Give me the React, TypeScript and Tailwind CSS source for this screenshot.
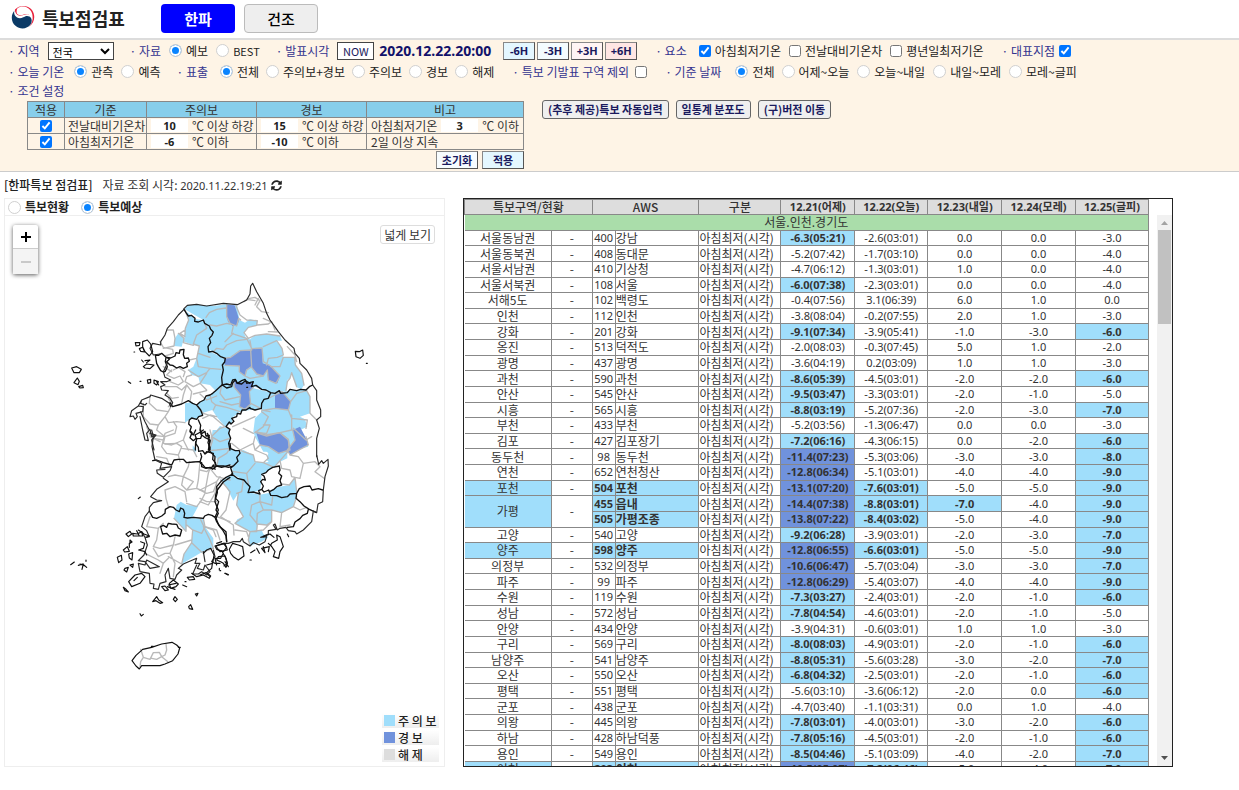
import React from "react";
import { FaSyncAlt } from "react-icons/fa";

type Row = {
  area?: string;
  span?: number;
  areaAlert?: boolean;
  id: string;
  name: string;
  v: [string, string, string, string, string];
  // one letter per day: n = none, a = advisory, w = warning
  lv: string;
};

const r = (
  area: string | undefined,
  id: string,
  name: string,
  v: Row["v"],
  lv: string,
  areaAlert = false,
  span = 1,
): Row => ({ area, id, name, v, lv, areaAlert, span });

const rows: Row[] = [
  r("서울동남권", "400", "강남", ["-6.3(05:21)", "-2.6(03:01)", "0.0", "0.0", "-3.0"], "annnn"),
  r("서울동북권", "408", "동대문", ["-5.2(07:42)", "-1.7(03:10)", "0.0", "0.0", "-4.0"], "nnnnn"),
  r("서울서남권", "410", "기상청", ["-4.7(06:12)", "-1.3(03:01)", "1.0", "0.0", "-4.0"], "nnnnn"),
  r("서울서북권", "108", "서울", ["-6.0(07:38)", "-2.3(03:01)", "0.0", "0.0", "-4.0"], "annnn"),
  r("서해5도", "102", "백령도", ["-0.4(07:56)", "3.1(06:39)", "6.0", "1.0", "0.0"], "nnnnn"),
  r("인천", "112", "인천", ["-3.8(08:04)", "-0.2(07:55)", "2.0", "1.0", "-3.0"], "nnnnn"),
  r("강화", "201", "강화", ["-9.1(07:34)", "-3.9(05:41)", "-1.0", "-3.0", "-6.0"], "annna"),
  r("옹진", "513", "덕적도", ["-2.0(08:03)", "-0.3(07:45)", "5.0", "1.0", "-2.0"], "nnnnn"),
  r("광명", "437", "광명", ["-3.6(04:19)", "0.2(03:09)", "1.0", "1.0", "-3.0"], "nnnnn"),
  r("과천", "590", "과천", ["-8.6(05:39)", "-4.5(03:01)", "-2.0", "-2.0", "-6.0"], "annna"),
  r("안산", "545", "안산", ["-9.5(03:47)", "-3.3(03:01)", "-2.0", "-1.0", "-5.0"], "annnn"),
  r("시흥", "565", "시흥", ["-8.8(03:19)", "-5.2(07:36)", "-2.0", "-3.0", "-7.0"], "annna"),
  r("부천", "433", "부천", ["-5.2(03:56)", "-1.3(06:47)", "0.0", "0.0", "-3.0"], "nnnnn"),
  r("김포", "427", "김포장기", ["-7.2(06:16)", "-4.3(06:15)", "0.0", "-2.0", "-6.0"], "annna"),
  r("동두천", "98", "동두천", ["-11.4(07:23)", "-5.3(03:06)", "-3.0", "-3.0", "-8.0"], "wnnna"),
  r("연천", "652", "연천청산", ["-12.8(06:34)", "-5.1(03:01)", "-4.0", "-4.0", "-9.0"], "wnnna"),
  r("포천", "504", "포천", ["-13.1(07:20)", "-7.6(03:01)", "-5.0", "-5.0", "-9.0"], "wanna", true),
  r("가평", "455", "읍내", ["-14.4(07:38)", "-8.8(03:01)", "-7.0", "-4.0", "-9.0"], "waana", true, 2),
  r(undefined, "505", "가평조종", ["-13.8(07:22)", "-8.4(03:02)", "-5.0", "-4.0", "-9.0"], "wanna", true),
  r("고양", "540", "고양", ["-9.2(06:28)", "-3.9(03:01)", "-2.0", "-3.0", "-7.0"], "annna"),
  r("양주", "598", "양주", ["-12.8(06:55)", "-6.6(03:01)", "-5.0", "-5.0", "-9.0"], "wanna", true),
  r("의정부", "532", "의정부", ["-10.6(06:47)", "-5.7(03:04)", "-3.0", "-3.0", "-7.0"], "wnnna"),
  r("파주", "99", "파주", ["-12.8(06:29)", "-5.4(03:07)", "-4.0", "-4.0", "-9.0"], "wnnna"),
  r("수원", "119", "수원", ["-7.3(03:27)", "-2.4(03:01)", "-2.0", "-1.0", "-6.0"], "annna"),
  r("성남", "572", "성남", ["-7.8(04:54)", "-4.6(03:01)", "-2.0", "-1.0", "-5.0"], "annnn"),
  r("안양", "434", "안양", ["-3.9(04:31)", "-0.6(03:01)", "1.0", "1.0", "-3.0"], "nnnnn"),
  r("구리", "569", "구리", ["-8.0(08:03)", "-4.9(03:01)", "-2.0", "-1.0", "-6.0"], "annna"),
  r("남양주", "541", "남양주", ["-8.8(05:31)", "-5.6(03:28)", "-3.0", "-2.0", "-7.0"], "annna"),
  r("오산", "550", "오산", ["-6.8(04:32)", "-2.5(03:01)", "-2.0", "-1.0", "-6.0"], "annna"),
  r("평택", "551", "평택", ["-5.6(03:10)", "-3.6(06:12)", "-2.0", "0.0", "-6.0"], "nnnna"),
  r("군포", "438", "군포", ["-4.7(03:40)", "-1.1(03:31)", "0.0", "1.0", "-4.0"], "nnnnn"),
  r("의왕", "445", "의왕", ["-7.8(03:01)", "-4.0(03:01)", "-3.0", "-2.0", "-6.0"], "annna"),
  r("하남", "428", "하남덕풍", ["-7.8(05:16)", "-4.5(03:01)", "-2.0", "-1.0", "-6.0"], "annna"),
  r("용인", "549", "용인", ["-8.5(04:46)", "-5.1(03:09)", "-4.0", "-2.0", "-7.0"], "annna"),
  r("이천", "203", "이천", ["-10.5(05:07)", "-7.2(06:46)", "-5.0", "-4.0", "-7.0"], "wanna", true),
];

const levelClass: Record<string, string> = {
  n: "",
  a: "bg-[#a0defb] font-bold",
  w: "bg-[#7092dc] font-bold",
};

const hangul = "font-['Noto_Sans_CJK_KR',sans-serif]";

function Radio({ name, label, checked, className = "" }: { name: string; label: string; checked?: boolean; className?: string }) {
  return (
    <label className={`flex items-center gap-1 ${className}`}>
      <input
        type="radio"
        name={name}
        defaultChecked={checked}
        className="size-[13px] shrink-0 appearance-none rounded-full border border-[#d0d0d0] bg-white checked:bg-[#0a84ff] checked:shadow-[inset_0_0_0_2px_white]"
      />
      {label}
    </label>
  );
}

function Check({ label, checked, className = "" }: { label: string; checked?: boolean; className?: string }) {
  return (
    <label className={`flex items-center gap-1 ${className}`}>
      <input type="checkbox" defaultChecked={checked} className="size-3 shrink-0 accent-[#0075ff]" />
      {label}
    </label>
  );
}

function Caption({ children, className = "" }: { children: React.ReactNode; className?: string }) {
  return <span className={`text-[#33338f] ${className}`}>· {children}</span>;
}

function Num({ value, label }: { value: string; label: string }) {
  return (
    <input
      aria-label={label}
      defaultValue={value}
      className="h-[13px] w-[37px] bg-white text-center font-['Noto_Sans',sans-serif] text-[11px] font-bold text-[#222]"
    />
  );
}

const smallBtn = "h-[18px] border border-[#888] border-r-[#555] border-b-[#555] text-[11px] leading-[14px] font-bold text-[#1a1a5e]";

function Filters() {
  return (
    <section className="border-t-2 border-b border-t-[#dcdcdc] border-b-[#ccc] bg-[#fef4e6] pb-[2px] pl-2 text-[12px] leading-[18px] text-[#222]">
      <div className="flex h-[21px] items-center whitespace-nowrap">
        <Caption>지역</Caption>
        <select
          aria-label="지역"
          className="ml-2 h-[18px] w-[66px] border border-[#444] bg-white pl-0 text-[11px] text-black"
        >
          <option>전국</option>
        </select>
        <Caption className="ml-4">자료</Caption>
        <Radio name="src" label="예보" checked className="ml-2" />
        <Radio name="src" label="BEST" className="ml-2 text-[11px]" />
        <Caption className="ml-4">발표시각</Caption>
        <button className="ml-2 h-[18px] w-[37px] border border-[#444] bg-white text-[11px] leading-[14px] text-[#1a1a5e]">NOW</button>
        <strong className="ml-[5px] font-['Noto_Sans',sans-serif] text-[14px] text-[#12126a]">2020.12.22.20:00</strong>
        <div className="ml-3 flex gap-[2px] font-['Noto_Sans',sans-serif]">
          <button className={`${smallBtn} w-8 bg-[#e4f7ff]`}>-6H</button>
          <button className={`${smallBtn} w-8 bg-[#f4fcff]`}>-3H</button>
          <button className={`${smallBtn} w-8 bg-[#fff4f4]`}>+3H</button>
          <button className={`${smallBtn} w-8 bg-[#ffe6e4]`}>+6H</button>
        </div>
        <Caption className="ml-[18px]">요소</Caption>
        <Check label="아침최저기온" checked className="ml-3" />
        <Check label="전날대비기온차" className="ml-2" />
        <Check label="평년일최저기온" className="ml-2" />
        <label className="ml-[18px] flex items-center gap-1 text-[#33338f]">
          · 대표지점
          <input type="checkbox" defaultChecked className="size-3 accent-[#0075ff]" />
        </label>
      </div>

      <div className="flex h-[21px] items-center whitespace-nowrap">
        <Caption>오늘 기온</Caption>
        <Radio name="today" label="관측" checked className="ml-[10px]" />
        <Radio name="today" label="예측" className="ml-2" />
        <Caption className="ml-4">표출</Caption>
        <Radio name="show" label="전체" checked className="ml-3" />
        <Radio name="show" label="주의보+경보" className="ml-[7px]" />
        <Radio name="show" label="주의보" className="ml-[7px]" />
        <Radio name="show" label="경보" className="ml-[7px]" />
        <Radio name="show" label="해제" className="ml-[7px]" />
        <label className="ml-[18px] flex items-center gap-[6px] text-[#33338f]">
          · 특보 기발표 구역 제외
          <input type="checkbox" className="size-3" />
        </label>
        <Caption className="ml-[18px]">기준 날짜</Caption>
        <Radio name="day" label="전체" checked className="ml-[14px]" />
        <Radio name="day" label="어제~오늘" className="ml-[7px]" />
        <Radio name="day" label="오늘~내일" className="ml-2" />
        <Radio name="day" label="내일~모레" className="ml-2" />
        <Radio name="day" label="모레~글피" className="ml-2" />
      </div>

      <div className="flex h-[18px] items-center">
        <Caption>조건 설정</Caption>
      </div>

      <div className="flex items-start whitespace-nowrap pl-[19px]">
        <div>
          <table className="mt-px table-fixed border-collapse text-[12px] leading-[15px] text-[#333] [&_td]:border [&_td]:border-[#888] [&_td]:p-0 [&_th]:border [&_th]:border-[#888] [&_th]:p-0 [&_th]:font-normal">
            <colgroup>
              <col className="w-[37px]" />
              <col className="w-[82px]" />
              <col className="w-[110px]" />
              <col className="w-[110px]" />
              <col className="w-[157px]" />
            </colgroup>
            <thead>
              <tr className="bg-[#87ceeb]">
                <th>적용</th>
                <th>기준</th>
                <th>주의보</th>
                <th>경보</th>
                <th>비고</th>
              </tr>
            </thead>
            <tbody>
              <tr>
                <td>
                  <input type="checkbox" aria-label="전날대비기온차 적용" defaultChecked className="mx-auto block size-3 accent-[#0075ff]" />
                </td>
                <td>
                  <div className="pl-[3px]">전날대비기온차</div>
                </td>
                <td>
                  <div className="flex items-center gap-1 pl-1">
                    <Num value="10" label="주의보 전날대비" />℃ 이상 하강
                  </div>
                </td>
                <td>
                  <div className="flex items-center gap-1 pl-1">
                    <Num value="15" label="경보 전날대비" />℃ 이상 하강
                  </div>
                </td>
                <td>
                  <div className="flex items-center gap-1 pl-1">
                    아침최저기온 <Num value="3" label="아침최저기온 기준" />℃ 이하
                  </div>
                </td>
              </tr>
              <tr>
                <td>
                  <input type="checkbox" aria-label="아침최저기온 적용" defaultChecked className="mx-auto block size-3 accent-[#0075ff]" />
                </td>
                <td>
                  <div className="pl-[3px]">아침최저기온</div>
                </td>
                <td>
                  <div className="flex items-center gap-1 pl-1">
                    <Num value="-6" label="주의보 최저기온" />℃ 이하
                  </div>
                </td>
                <td>
                  <div className="flex items-center gap-1 pl-1">
                    <Num value="-10" label="경보 최저기온" />℃ 이하
                  </div>
                </td>
                <td>
                  <div className="pl-1">2일 이상 지속</div>
                </td>
              </tr>
            </tbody>
          </table>
          <div className="mt-px flex justify-end gap-1">
            <button className={`${smallBtn} w-[42px] bg-[#f7fcff]`}>초기화</button>
            <button className={`${smallBtn} w-[42px] bg-[#e4f7ff]`}>적용</button>
          </div>
        </div>
        <div className="ml-[18px] flex gap-[7px]">
          {["(추후 제공)특보 자동입력", "일통계 분포도", "(구)버전 이동"].map((t) => (
            <button
              key={t}
              className="h-[19px] rounded-[3px] border border-[#666] bg-[#efefef] px-[5px] text-[11px] leading-[15px] font-bold text-[#1a1a5e]"
            >
              {t}
            </button>
          ))}
        </div>
      </div>
    </section>
  );
}

const A = "translate(50 270) scale(.33333)";
const B = "translate(200 270) scale(.33333)";
const C = "translate(50 430) scale(.33333)";
const D = "translate(200 430) scale(.33333)";
const E = "translate(50 560) scale(.33333)";

function KoreaMap() {
  return (
    <svg viewBox="5 216 439 550" className="block w-full" role="img" aria-label="특보 예상 지도" strokeLinejoin="round" strokeLinecap="round">
      {/* advisory areas */}
      <g fill="#a0defb">
        <path
          transform={B}
          d="M-46,118L-36,105L0,105L40,108L80,103L112,107L118,150L135,158L150,148L172,152L170,166L145,172L132,188L138,205L150,208L165,196L200,192L240,198L246,212L228,212L246,235L250,262L284,262L286,285L305,310L312,345L304,358L290,352L274,308L270,325L262,330L258,362L215,368L180,355L103,335L65,348L72,265L30,240L25,215L40,188L10,150Z"
        />
        <path
          transform={A}
          d="M404,120L416,150L406,175L402,215L430,225L448,228L440,265L430,290L415,300L425,315L445,320L450,340L480,345L497,362L515,345L525,265L480,245L478,205L490,185L460,150L435,147ZM385,190L402,205L395,230L372,228L375,205Z"
        />
        <path
          transform={A}
          d="M440,405L480,375L515,345L560,340L600,352L665,368L655,388L632,415L600,420L570,425L550,440L545,460L525,470L500,440L487,420L455,430ZM405,400L425,397L440,405L458,432L440,446L420,448L405,458ZM510,468L538,476L540,540L478,540L484,500Z"
        />
        <path
          transform={B}
          d="M215,368L265,362L320,358L330,380L330,430L300,440L315,448L322,470L300,480L325,530L262,545L190,545L165,500L160,485L165,445L185,425L182,415Z"
        />
        <path
          transform={D}
          d="M38,0L88,0L90,55L118,65L110,100L85,108L50,108L50,85L28,62ZM95,80L130,60L160,75L165,95L190,98L210,95L222,115L200,125L185,135L183,180L150,190L145,160L98,132ZM180,45L262,60L262,85L240,95L222,112L200,90L205,70ZM62,150L95,135L145,160L150,188L180,194L210,188L215,175L268,165L285,142L290,190L280,230L245,248L215,240L215,275L200,285L172,282L170,305L150,305L105,280L112,268L130,260L110,225L115,190L100,212L78,168ZM150,305L185,300L190,312L205,322L185,335L150,348L145,328Z"
        />
        <path
          transform={C}
          d="M380,225L392,215L410,225L445,228L425,265L460,265L465,290L490,325L490,355L455,367L395,402L402,372L425,338L428,300L410,285L408,304L395,290L372,265ZM428,46L440,60L434,70L428,60Z"
        />
      </g>
      <path transform={D} fill="#fff" d="M240,110L245,140L240,165L210,182L180,186L186,135L200,125L222,110Z" />

      {/* warning areas */}
      <g fill="#7092dc">
        <path
          transform={B}
          d="M80,104L104,106L118,150L112,164L98,168L84,155L80,135ZM72,265L92,262L120,242L152,240L154,236L186,234L188,280L212,288L240,318L232,340L205,330L200,302L190,318L170,312L152,290L138,300L135,318L120,308L118,288L75,286ZM103,335L158,338L160,352L148,365L152,402L140,418L118,410L122,375L103,352ZM225,375L246,365L272,395L265,420L225,415Z"
        />
        <path transform={D} d="M168,5L200,14L240,8L265,28L268,60L236,70L205,50L180,45ZM278,0L300,-10L318,25L325,45L300,58L270,75L262,60L285,30Z" />
      </g>

      {/* district borders */}
      <g fill="none" stroke="#b9b9b9" strokeWidth="4">
        <path
          transform={A}
          d="M404,118L416,150L406,175L405,195M468,142L478,128L500,118L528,114M530,105V140L540,160L560,168L566,145L572,150M480,165L500,168L530,160L540,162M490,245L500,235L520,238L530,225L560,212L590,208M460,150L470,175L440,195L430,222L448,228L440,265L418,270M350,180H370L375,205L372,228L340,235M330,215L340,232L368,238L370,250L345,258M385,190L402,205L400,218L430,226M405,180L390,190L405,200M445,250L480,262M440,265L445,290L480,295L512,298M415,300L445,320L470,308L480,295M450,340L470,310M425,315L410,320L405,335L430,350L450,340L470,360M365,300L350,315L372,325L390,318L400,335L385,345L360,335M345,350L380,350L395,360L410,345L400,375L395,400M370,300L385,292L405,305L400,320M340,290L365,305M410,345L425,365L420,395M470,362L430,372M350,370L365,385L385,382M355,385L365,400L355,410M300,378L298,400L320,420L355,425L365,405M355,425L345,440L355,458L380,455L405,458M280,400L280,440L300,462L325,465L345,440M325,465L320,480L345,500L375,490L380,470L370,455M290,470L300,495L345,500L340,520L365,525L400,510L410,480M300,500L330,515M400,510L415,540M440,405L460,430L490,440L525,470M480,375L485,395L497,405L490,420M515,345L510,370L525,390L570,380M497,405L530,412L570,425M458,445L480,435L500,440M525,470L510,475L484,500L480,540M484,500L510,515L540,505"
        />
        <path
          transform={B}
          d="M132,95L145,86L165,82L180,92L170,110L185,125L205,128M108,107L120,135L140,150L172,152L170,166L145,172L132,188L145,205L165,196L200,192L240,198M165,105L175,85M140,88L165,92M190,145L212,155M205,185L232,186M172,165L205,162L215,155L225,180M100,168L95,190L140,205L155,235M75,215L100,190M72,265L92,262L120,242L152,240L155,290L140,300L135,318L118,305L118,288L75,286M155,236L186,234L190,275L212,288L240,318L228,340L205,330L202,300L190,318L170,312L155,292M155,240L150,212M190,230L230,212L246,235L250,255L232,262L205,265L200,285M250,262H284L286,285L305,310L312,345M250,262L240,290L212,290M262,230L285,255L290,275M258,362L262,335L270,325L275,308L290,350M135,318L150,325L180,320L190,318M100,335L103,352L122,375L118,410L135,418L152,402L148,365L160,352M60,395L95,405L118,400M152,400L182,415M0,372L20,390L50,378M205,385L225,375L246,365L272,395L265,420L225,415L195,420M272,395L290,370L320,362L330,380L330,430L350,450M265,420L275,445L322,450L318,475M185,425L205,440L190,470L165,488M185,420L210,425M165,488L200,490L210,465L190,465M168,488L200,498L240,488L265,510L270,540M240,488L275,480L275,435M280,475L318,510L335,500M98,470L120,460L165,440M130,475L160,490"
        />
        <path
          transform={C}
          d="M310,25L340,30L345,10L370,0M340,30L335,50L350,70L385,75L395,50L380,40L345,42M385,75L390,95M395,55L430,60L440,80M320,80L350,85L358,105M355,140L375,135L400,140L415,110L418,95M400,140L430,155L410,180L395,165L400,140M450,95L445,150L440,175L465,185L475,130L480,115L500,140L540,150M345,180L375,170L405,185L410,215M345,180L348,205L355,230M410,180L440,175L470,190L490,185L500,160M450,205L470,215L500,215M410,220L440,230L455,210L465,190M300,260L290,290L325,295L340,280M325,295L320,330L310,350L330,355L370,345L375,320M370,345L360,370L375,400L370,440M310,355L325,380L345,370L360,370M285,370L325,390L340,400L330,430M340,400L355,385M372,265L395,290L408,304V270M410,285L428,300L455,310L465,290L460,265L430,262M428,300L425,338L455,367L490,355M425,338L402,372L395,402M375,345L425,330M355,380L395,402M465,290L500,300L510,330M500,260L540,275"
        />
        <path
          transform={D}
          d="M28,62L50,60L90,55M50,108L55,85L80,70L90,55M30,0L38,30L28,62M95,40L120,60L160,40L165,20M120,60L130,65L160,75L165,95L190,98L205,85L200,75L165,60L160,40M168,5L200,14L240,8L265,28L268,60L236,70L205,50L180,45L165,60M278,0L285,30L262,60L270,75L300,58L325,45L318,20M268,60L240,92L222,112L190,98M240,92L245,115L270,120L275,140L300,145L310,100L295,80L270,75M310,100L345,95L360,110L345,125L372,145M285,142L268,165L245,162M285,142L290,185M100,125L140,130L165,100M140,130L145,160M0,120L20,125L40,105M0,180L50,155L60,140M50,155L45,190L25,225L0,215M62,150L90,185L78,240L60,262M110,190L125,185L130,150M115,190L110,225L130,260L105,280L150,305H170L172,282L150,255L155,225L180,215V195M180,215L215,225L218,200M180,215L190,240L172,250L170,282M190,240L215,240V275L200,285L172,282M215,240L245,248L280,230L290,200M245,248L240,290L270,285M280,230L300,240L320,232M215,275L190,300L150,305M65,262L100,285L102,315M0,265L12,290L40,300L48,320M150,305L145,330L150,345M10,290L30,330L40,355M105,300L140,305L145,320"
        />
        <path transform={E} d="M272,268L280,292L300,298L310,278L328,277L335,290L320,298L305,295M348,252L350,270L345,285L335,290L350,302L355,308M280,292L272,305L270,322" />
      </g>

      {/* provincial borders */}
      <g fill="none" stroke="#111" strokeWidth="4">
        <path
          transform={A}
          d="M402,118L408,128L415,138L424,136L435,145L434,154L445,156L460,150L464,160L478,168L482,178L490,186L486,196L478,205L482,218L474,230L476,246L488,244L500,250L512,260L526,265L524,276L517,285L520,300L515,322L517,345L510,350L497,362L488,370L480,375L468,378L462,390L450,396L440,405L428,400L415,392L395,402L368,410L360,398M517,345L530,354L545,350L548,338L556,330L562,340L575,342L586,332L600,340M440,405L452,420L458,436L446,440L440,448L425,444L418,450L416,462L424,470L420,482L426,488L420,503L430,512L437,506L452,505L455,496L450,480L452,466L445,450M456,490L465,484L468,498L478,496L474,505L480,512M437,515L436,540M480,512L477,525L480,540M600,412L588,420L576,420L572,432L562,430L560,440L545,445L552,454L543,462L538,456L528,470L540,478L536,490L542,505L536,520L540,540"
        />
        <path
          transform={A}
          d="M350,262L362,264L375,258L378,248L388,250L390,240L402,238L400,254L404,265L415,264L418,274L410,280L412,290L400,295L390,290L380,294L368,286L360,285L350,275L358,268ZM316,255L325,256L335,250L348,262L346,275L352,290L346,304L340,306L332,302L325,290L320,280Z"
        />
        <path
          transform={B}
          d="M66,345L80,342L92,345L98,330L106,328L112,340L125,332L135,328L140,340L160,335L154,350L168,346L185,358L198,360L212,368L225,370L238,362L242,370L262,368L270,358L290,362L302,358L318,360L328,350L338,345M212,368L205,385L192,388L185,400L184,415L165,420L150,415"
        />
        <path
          transform={C}
          d="M308,92L320,90L340,98L365,105L372,90L385,88L400,88L410,98L430,96L445,95L455,98L455,110L468,115L480,112L488,118L500,108L515,112L540,105M437,0L430,15L420,5M437,40L445,52L446,64L458,62L465,72L470,65L490,70L488,88L496,98L495,110M437,40L440,28L435,15L452,6L460,0M472,10L478,22L474,38L480,52L478,62L465,72M450,95L455,80L452,70"
        />
        <path
          transform={C}
          d="M298,243L308,262L320,265L335,258L345,250L346,238L360,230L370,232L378,240L388,245L392,234L400,238L404,250L402,262L412,264L430,262L460,265L464,258L475,253L486,256L495,262L500,275L510,290L528,305L530,335M495,262L505,240L500,228L495,215L497,195L502,180L520,156L540,142M332,290L340,286L350,292L355,280L365,282L380,283L385,294L395,300L390,318L375,315L360,320L350,310L338,312L335,302Z"
        />
        <path
          transform={D}
          d="M90,40L92,56L106,62L118,62L120,70L110,82L114,94L100,108L92,114L98,132L78,142L65,152L50,170L52,188L47,205L56,215L48,240L55,250L48,265L56,285L68,300L78,318L80,335M100,108L85,112L70,108L50,108M45,118L40,105L35,114L15,112L8,104L2,100M95,132L112,145L132,150L140,160L150,170L144,188L160,186L180,192L176,182L185,178L192,186L206,180L212,196L230,197L245,203L262,200L270,192L290,190L298,176L312,170L330,168L336,180L355,176L368,180M186,178L190,168L182,155L188,148L196,150L192,138L185,133L198,128L205,120L218,112L238,108L240,120L236,130L245,138L240,152L245,165L230,170L222,178L210,184M290,190L288,205L300,215L312,228L328,238L348,247M325,238L322,250L308,256L300,266L285,276L280,290L262,292M2,0L4,14L14,22L30,30L25,60M30,64L45,80L44,95L48,105"
        />
      </g>

      {/* coast line */}
      <g fill="none" stroke="#2a2a2a" strokeWidth="3.5">
        <path
          transform={B}
          d="M-48,116L-38,106L-10,103L20,108L70,100L112,104L140,90L150,72L152,48L158,40L170,65L190,100L200,130L210,150L235,185L255,210L282,235L285,250L298,265L300,280L320,300L335,325L338,345L350,362L350,390L362,420L362,440L350,450L358,475L350,505L350,560"
        />
        <path
          transform={D}
          d="M350,75L356,103L365,92L370,100L384,88L385,108L375,140L370,180L368,215L354,222L350,248L340,243L335,275L310,300L290,312L285,305L265,302L258,292L240,295L232,300L225,282L220,285L228,298L205,302L205,312L182,322L200,320L195,335L178,345L160,338L150,348L130,335L127,325L120,335L100,335L85,340L70,340"
        />
        <path
          transform={A}
          d="M402,118L385,135L370,155L352,175L345,195L332,215V225L308,220L300,235L310,255L330,252M352,280L340,305L345,322L362,330L350,335L332,335L345,345L332,350L335,360L355,362L345,375L360,385L368,398L362,410L358,400L335,385L302,375L300,380L275,390L272,400L285,405L290,400M275,390L265,408L245,422L240,440L250,438L255,448L262,440L258,430L278,425L280,410L265,408M270,440L278,480L285,510L295,512L290,490L298,480L285,455L272,425M300,478L305,500L318,495L300,490M318,495L305,510L312,540"
        />
        <path
          transform={C}
          d="M305,0L310,20L306,50L315,90L335,100L330,115L365,110L360,122L340,142L322,130L320,120L345,118M340,145L355,155L340,165L320,178L302,200L320,210L335,212L310,218L298,232V243M298,243L285,260L275,290L290,302L298,320L285,322L275,305M285,322L292,345L282,375L265,392L285,395L300,415L328,410L290,390L285,405L265,400L270,425L298,430L300,460L312,462L310,475L325,478L330,460L348,455L345,435L355,415L360,445L375,448L380,435L395,420L385,415L400,402L440,385L435,400L450,400L442,415L460,420L465,405L480,425L470,435L455,425L445,432L428,432L440,405M490,360L495,380L485,395L495,400M460,365L465,395"
        />
      </g>

      {/* islands */}
      <g fill="none" stroke="#111" strokeWidth="3.5">
        <path
          transform={A}
          d="M65,294L80,290L94,298L88,308H72ZM72,338L82,324L88,334L84,344ZM86,350L98,346L100,353L90,354ZM235,335L242,340M270,334H273M292,330L302,328V338L294,340ZM312,330L325,335L320,345L312,340ZM326,345L320,335M256,218L270,218L268,226L258,228ZM268,236L278,232L284,246L272,244ZM252,246H254M278,215L292,210L302,222L308,245L298,258L285,245L278,230ZM275,270L280,276M285,272L300,270L290,278M280,290L290,282L312,285L300,296L285,294Z"
        />
        <path transform={B} d="M466,244L478,245L488,240L490,256L480,265L468,260ZM499,280H502M140,352H143" />
        <path
          transform={C}
          d="M265,206L271,201M228,312L240,304L245,312L235,320ZM248,310L262,312L275,305L278,318H250ZM260,302L268,318M265,300L282,312L298,318L290,322M240,330L246,336L240,340ZM220,360L232,350L238,364L224,366ZM202,382L214,376L216,390L206,398ZM238,340V352M236,372L248,368L246,390L238,384ZM225,415L235,412L230,426L222,420ZM240,405L250,402L248,412ZM272,335L284,340L280,355L266,360L285,365L290,375M236,455L255,435L275,430L285,440L270,460L245,470ZM252,452L262,442M220,472L228,478L235,486L225,482ZM308,515L320,500L326,510L338,518L330,520L318,512ZM370,508L375,500L382,508L376,515ZM436,492L444,490L440,498ZM416,530L422,524L428,538L418,536ZM335,470L345,468L355,480L345,482ZM358,460L370,450L385,462L378,470L362,475ZM355,465L378,460M352,470L375,478M398,465L410,470M405,455H408M412,442L430,440L434,448L418,450ZM425,430L440,440L460,435L478,445L482,438L470,428L485,415L488,395M62,404L73,396M85,406L98,402L110,412M90,402L105,408M96,418L100,402M108,390V394M495,348L520,340L530,352L520,365L500,358ZM520,370L512,385L495,385L500,405M515,362L528,385L532,400L522,408M525,430L535,434M508,415V420M525,395L535,410M500,340L515,335"
        />
        <path
          transform={D}
          d="M48,348L75,340L82,360L60,365L52,355ZM88,358L98,340L115,345L128,350L132,378L115,390L100,380L92,370ZM55,380L75,378L82,400L78,412L70,400L62,395L50,390ZM45,400H60M75,430L84,435M60,422H62M150,390H154M152,368L165,360M170,355L178,370M190,350L195,368L185,355L208,350L205,365M215,340L232,330L230,315L240,320L250,350L240,365L236,385L220,380L225,365L212,345ZM262,312L266,320M190,320L210,312L222,322M205,340L215,350M10,370L20,360L32,355L42,375L38,400L20,405M0,435L18,428L30,440"
        />
        <path transform={E} d="M246,302L258,286L278,268L305,262L335,252L366,247L380,255L389,264L384,282L368,302L345,312L330,317H275L268,327L258,318ZM304,259H310M270,161L274,168L280,163M385,262L391,262" />
      </g>
    </svg>
  );
}

function MapPanel() {
  return (
    <section className="border border-[#eee]">
      <div className="flex h-[17px] items-center gap-3 border-b border-[#eee] text-[12px] leading-[16px] font-bold text-[#222]">
        <Radio name="map" label="특보현황" className="ml-[3px]" />
        <Radio name="map" label="특보예상" checked />
      </div>
      <div className="relative">
        <KoreaMap />
        <div className="absolute top-[9px] left-2 flex w-[25px] flex-col rounded-[2px] bg-white shadow-[0_1px_4px_rgba(0,0,0,0.65)]">
          <button aria-label="확대" className="flex h-[24px] items-center justify-center border-b border-[#ccc] text-black">
            <svg viewBox="0 0 10 10" className="size-[10px]" stroke="currentColor" strokeWidth="2"><path d="M0 5H10M5 0V10" /></svg>
          </button>
          <button aria-label="축소" className="flex h-[25px] items-center justify-center bg-[#f4f4f4] text-[#bbb]">
            <svg viewBox="0 0 10 10" className="size-[10px]" stroke="currentColor" strokeWidth="1.5"><path d="M0 5H10" /></svg>
          </button>
        </div>
        <button className="absolute top-[9px] right-[9px] h-[19px] rounded-[3px] border border-[#ddd] bg-white px-[3px] text-[12px] leading-[16px] text-[#333]">넓게 보기</button>
        <ul className="absolute right-[5px] bottom-1 flex w-[57px] flex-col gap-[2px] text-[12px] leading-[15px] font-medium text-[#222]">
          <li className="flex h-[15px] items-center gap-[3px] bg-linear-to-b from-white to-[#eee] pl-[2px]"><i className="size-[11px] bg-[#a0defb]" />주 의 보</li>
          <li className="flex h-[15px] items-center gap-[3px] bg-linear-to-b from-white to-[#eee] pl-[2px]"><i className="size-[11px] bg-[#7092dc]" />경 보</li>
          <li className="flex h-[15px] items-center gap-[3px] bg-linear-to-b from-white to-[#eee] pl-[2px]"><i className="size-[11px] bg-[#ddd]" />해 제</li>
        </ul>
      </div>
    </section>
  );
}

function DataPanel() {
  const days = ["12.21(어제)", "12.22(오늘)", "12.23(내일)", "12.24(모레)", "12.25(글피)"];
  const num = "font-['Noto_Sans','Noto_Sans_CJK_KR',sans-serif] text-[11px]";
  return (
    <section className="flex h-[569px] overflow-hidden border border-[#222]">
      <table className="h-[579px] min-w-0 flex-1 table-fixed border-collapse whitespace-nowrap text-center text-[12px] leading-[14px] text-[#333] [&_td]:border [&_td]:border-[#888] [&_td]:p-0 [&_th]:border [&_th]:border-[#888] [&_th]:p-0 [&_td:first-child]:border-l-0">
        <colgroup>
          <col className="w-[87px]" />
          <col className="w-[41px]" />
          <col className="w-[23px]" />
          <col className="w-[84px]" />
          <col className="w-[82px]" />
          <col className="w-[74px]" />
          <col className="w-[73px]" />
          <col className="w-[74px]" />
          <col className="w-[74px]" />
          <col className="w-[73px]" />
        </colgroup>
        <thead>
          <tr className="bg-[#ddd]">
            <th colSpan={2} className="font-medium">특보구역/현황</th>
            <th colSpan={2} className="font-medium">AWS</th>
            <th className="font-medium">구분</th>
            {days.map((d) => (
              <th key={d} className={num}>{d}</th>
            ))}
          </tr>
        </thead>
        <tbody>
          <tr className="bg-[#aaddaa]">
            <td colSpan={10}>서울.인천.경기도</td>
          </tr>
          {rows.map((row) => {
            const hl = row.areaAlert ? "bg-[#a0defb] font-bold" : "";
            return (
              <tr key={row.id}>
                {row.area && (
                  <>
                    <td rowSpan={row.span} className={row.areaAlert ? "bg-[#a0defb]" : ""}>{row.area}</td>
                    <td rowSpan={row.span}>-</td>
                  </>
                )}
                <td className={`${num} ${hl}`}>{row.id}</td>
                <td className={`text-left ${hl}`}>{row.name}</td>
                <td className="text-left">아침최저(시각)</td>
                {row.v.map((v, i) => (
                  <td key={i} className={`${num} ${levelClass[row.lv[i]]}`}>{v}</td>
                ))}
              </tr>
            );
          })}
        </tbody>
      </table>
      <div className="mt-4 ml-2 flex w-[15px] shrink-0 flex-col items-center bg-[#f1f1f1]">
        <svg viewBox="0 0 15 15" className="size-[15px]" fill="#a3a3a3"><path d="M4 10h7L7.500 6z" /></svg>
        <div className="h-[94px] w-[13px] bg-[#c1c1c1]" />
        <svg viewBox="0 0 15 15" className="mt-auto size-[15px]" fill="#505050"><path d="M4 5h7L7.500 9z" /></svg>
      </div>
    </section>
  );
}

export default function App() {
  return (
    <main className={`bg-white ${hangul}`}>
      <header className="flex h-[38px] items-start">
        <svg viewBox="0 0 24 24" className="mt-[5px] ml-[11px] size-6" aria-hidden="true">
          <path d="M4 4.500C9-.5 17 0 21 5c4 6 2.500 13-3 17 4-5 4.500-9 1.500-11.500-2.500-2-5-1.500-7-.5C9.500 11 7 11 5.500 9 4.300 7.500 3.700 6 4 4.500z" fill="#e8203a" />
          <path d="M6.500 3.300C10.500-.2 18 1.500 20.500 7c1.800 4 1.300 8-.5 11 1-4 .3-7-2.500-8.500-2-1-4-.5-5.500.2C9 11 6 10 5.700 7.500 5.400 5.500 5.800 4.300 6.500 3.300z" fill="#fff" />
          <path d="M3.500 5.500C-.5 10 0 17 4.500 20.800c5 4.200 12 3 15-1.300 2-3 1.500-6.500-1-8-2.500-1.300-4.500-.3-6.300.8C9 14 5.500 13 4 10.500 3 9 2.900 7 3.500 5.500z" fill="#0b3a66" />
        </svg>
        <h1 className="mt-[5px] ml-[7px] w-[119px] text-[18px] leading-[26px] font-bold whitespace-nowrap text-[#222]">특보점검표</h1>
        <button className="mt-1 h-[29px] w-[74px] rounded-[4px] bg-[#0000ff] text-[15px] leading-[27px] font-bold text-white">한파</button>
        <button className="mt-1 ml-[9px] h-[29px] w-[74px] rounded-[4px] border border-[#bbb] bg-[#eee] text-[15px] leading-[25px] font-medium text-black">건조</button>
      </header>
      <Filters />
      <div className="w-full max-w-[1173px] pl-1">
        <div className="flex h-[26px] items-center text-[12px] whitespace-nowrap text-[#333]">
          <h2 className="font-medium text-[#222]">[한파특보 점검표]</h2>
          <p className="ml-[10px]">
            자료 조회 시각: <span className="font-['Noto_Sans',sans-serif] text-[11px]">2020.11.22.19:21</span>
          </p>
          <button aria-label="새로고침" className="ml-1 text-[#222]">
            <FaSyncAlt className="size-[11px]" />
          </button>
        </div>
        <div className="grid grid-cols-[441fr_710fr] items-start gap-[18px]">
          <MapPanel />
          <DataPanel />
        </div>
      </div>
    </main>
  );
}
